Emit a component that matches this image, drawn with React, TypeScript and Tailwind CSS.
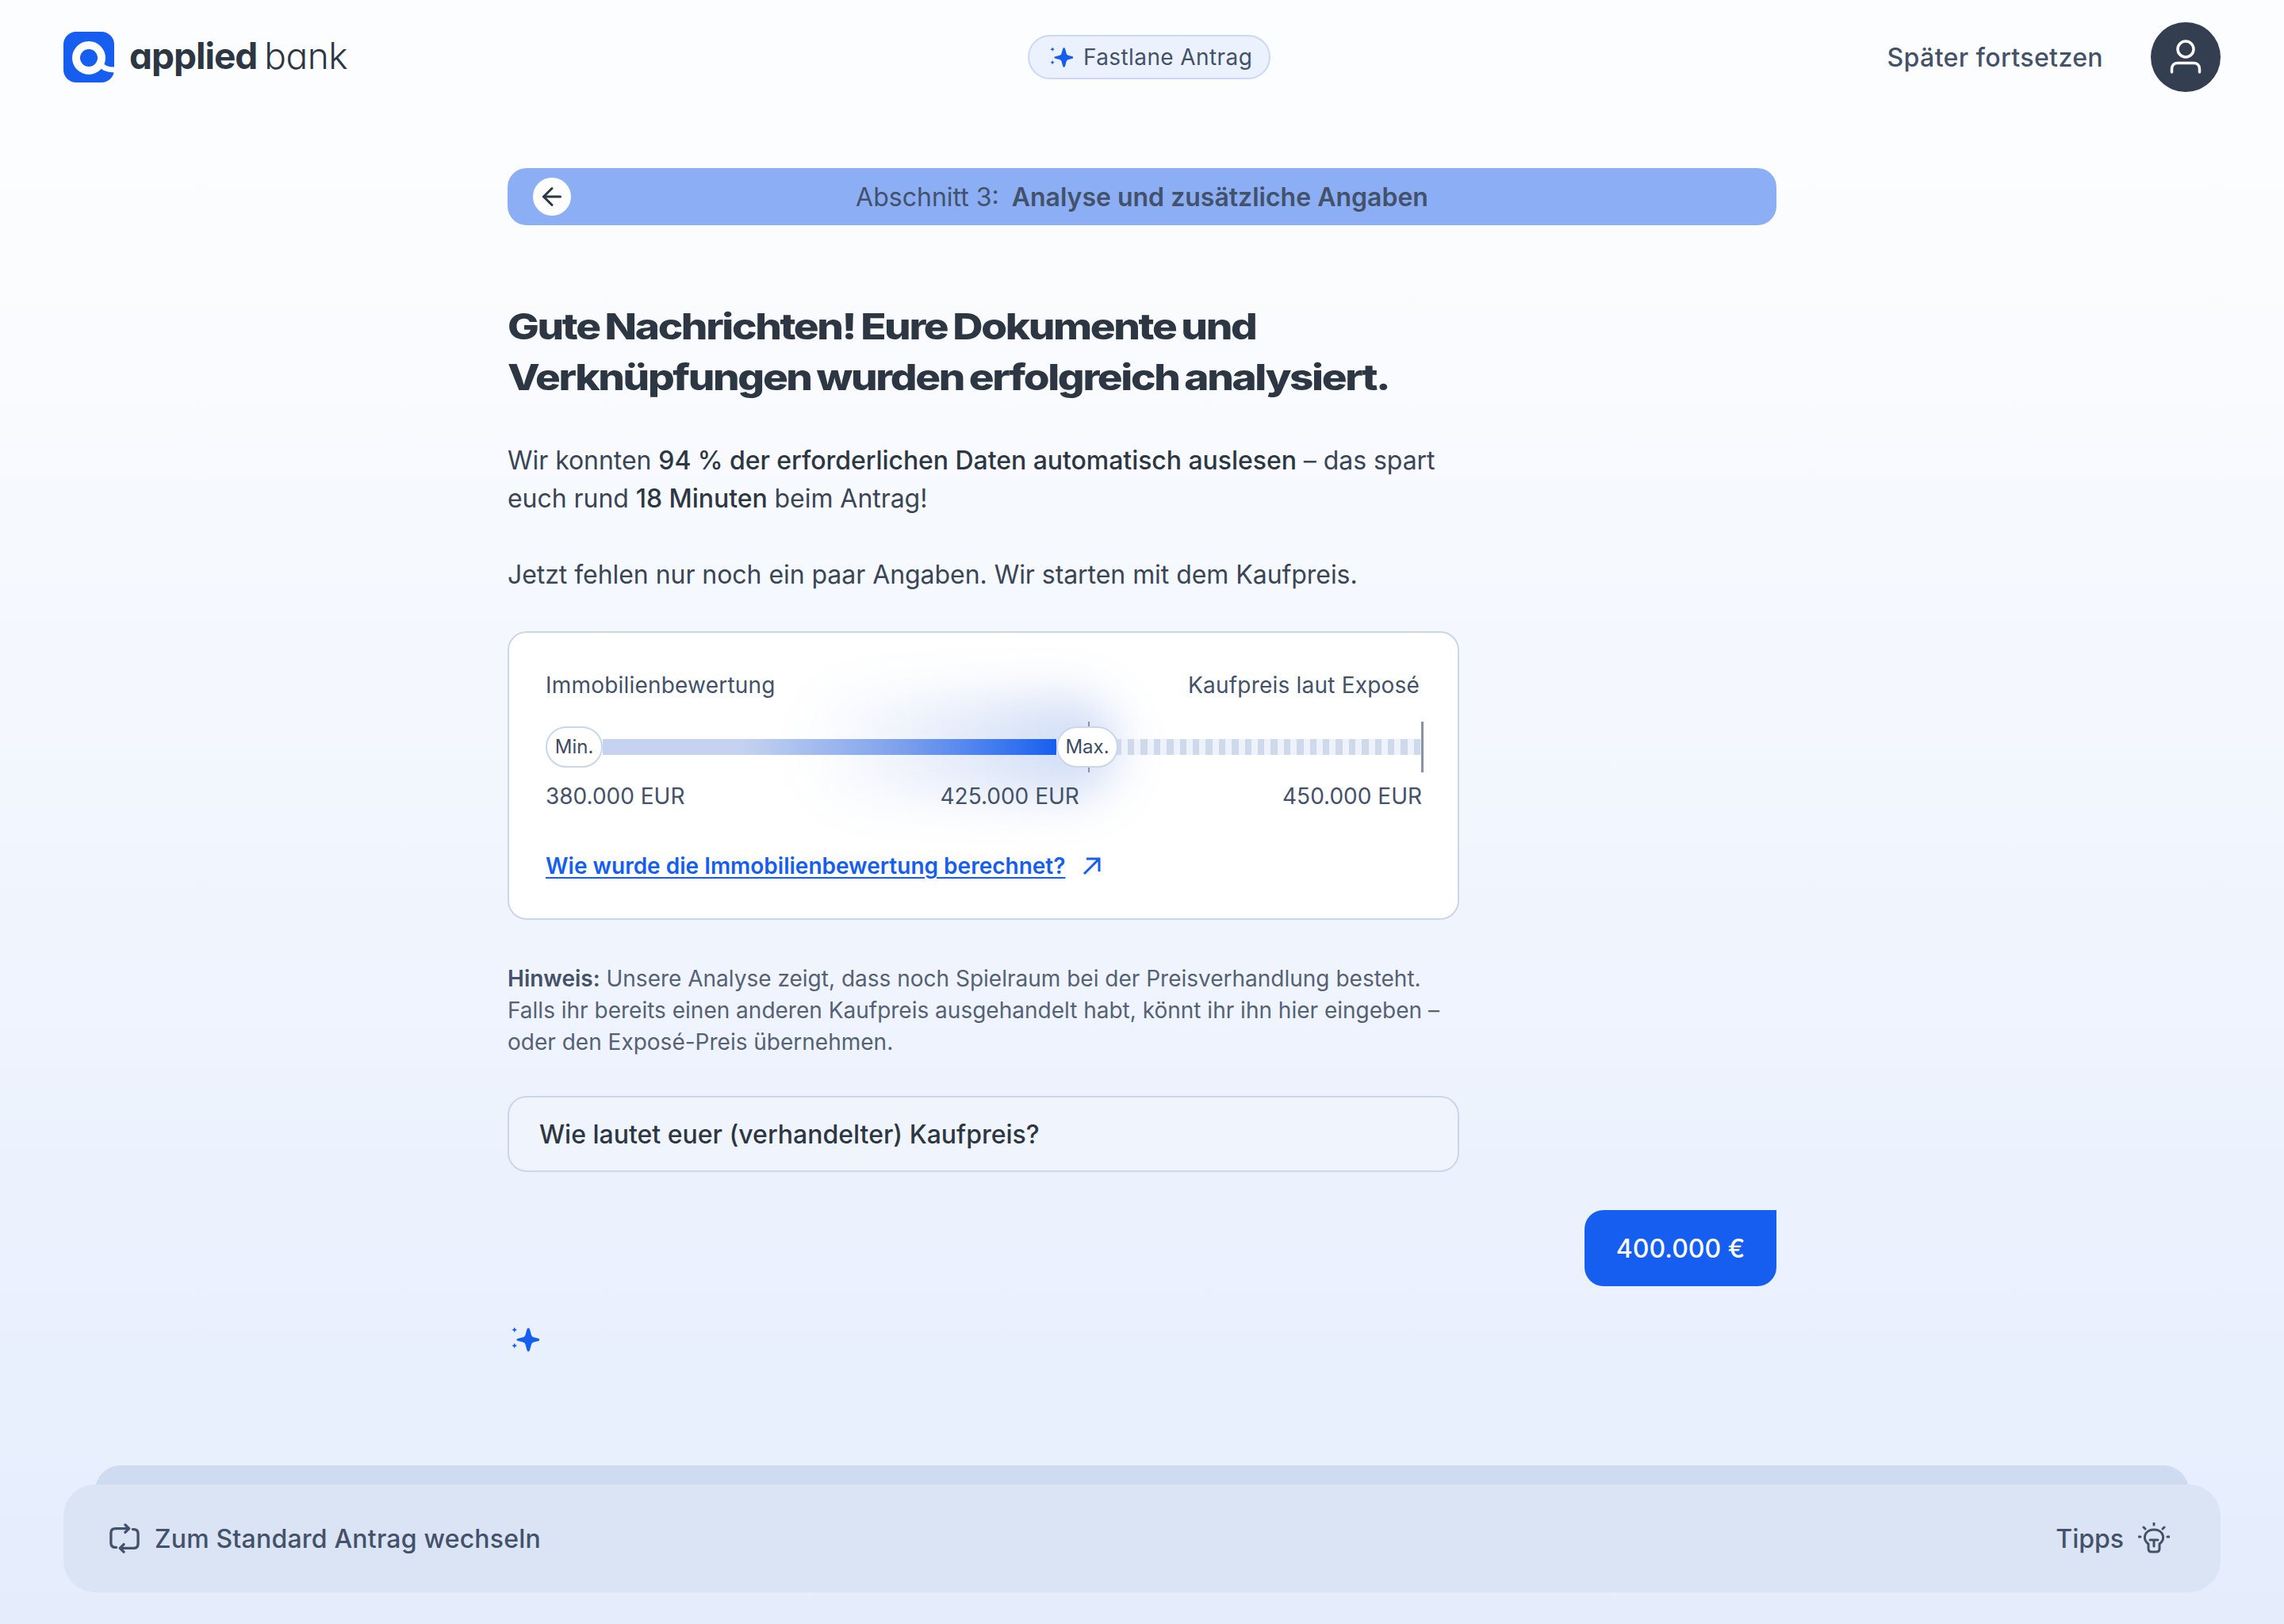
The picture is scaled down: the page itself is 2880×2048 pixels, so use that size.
import { ArrowLeft } from "lucide-react";

const font = "font-['Inter',sans-serif]";

function Sparkle({ className }: { className: string }) {
  return (
    <svg viewBox="0 0 28 28" className={className} fill="#155EEF">
      <path d="M17 2 Q18 2 18.6 4 L20 9.2 Q20.4 11 22 11.4 L27.4 12.8 Q29 13.4 29 14 Q29 14.6 27.4 15.2 L22 16.6 Q20.4 17 20 18.8 L18.6 24 Q18 26 17 26 Q16 26 15.4 24 L14 18.8 Q13.6 17 12 16.6 L6.6 15.2 Q5 14.6 5 14 Q5 13.4 6.6 12.8 L12 11.4 Q13.6 11 14 9.2 L15.4 4 Q16 2 17 2 Z" />
      <path d="M3 1.4 L3.9 3.2 L5.7 4 L3.9 4.8 L3 6.6 L2.1 4.8 L0.3 4 L2.1 3.2 Z" />
      <path d="M3 17.4 L3.9 19.2 L5.7 20 L3.9 20.8 L3 22.6 L2.1 20.8 L0.3 20 L2.1 19.2 Z" />
    </svg>
  );
}

function Logo() {
  return (
    <div className="flex items-center w-[356px]">
      <svg viewBox="0 0 64 64" className="w-16 h-16 shrink-0">
        <rect width="64" height="64" rx="16" fill="#155EEF" />
        <circle cx="32" cy="33" r="16" fill="none" stroke="#fff" strokeWidth="10" />
        <path d="M46 40 C49 45 55 48 64 48" fill="none" stroke="#fff" strokeWidth="7" />
      </svg>
      <span className="ml-[19px] text-[46px] leading-none font-bold tracking-[-1px] text-[#2d3743] [font-feature-settings:'cv11'] mb-1">applied</span>
      <span className="ml-[9px] text-[46px] leading-none font-light tracking-[-0.5px] text-[#2d3743] [font-feature-settings:'cv11'] mb-1">bank</span>
    </div>
  );
}

function Slider() {
  return (
    <div className="relative mt-[26px] h-[64px]">
      {/* glow behind the filled part */}
      <div className="absolute left-[320px] top-[-32px] w-[400px] h-[128px] rounded-full bg-gradient-to-r from-transparent to-[#2f66d6]/25 blur-[30px]" />
      <div className="absolute left-[72px] right-[0px] top-[22px] h-5 flex">
        <div className="w-[572px] bg-gradient-to-r from-[#c5d3f0] from-30% via-[#7ea2ec] via-65% to-[#155eef]" />
        <div className="flex-1 bg-[repeating-linear-gradient(90deg,#eef2fa_0,#eef2fa_8px,#cfd9ec_8px,#cfd9ec_16.4px)]" />
      </div>
      <div className="absolute left-[684px] top-0 w-[2px] h-[64px] bg-[#8a93a3]" />
      <div className="absolute right-[-3px] top-0 w-[3px] h-[64px] bg-[#8a93a3]" />
      <div className="absolute left-0 top-[6px] w-[72px] h-[52px] rounded-[26px] border-2 border-[#cbd6ea] bg-white flex items-center justify-center text-[24px] text-[#3f4b5f]">Min.</div>
      <div className="absolute left-[644px] top-[6px] w-[78px] h-[52px] rounded-[26px] border-2 border-[#cbd6ea] bg-white flex items-center justify-center text-[24px] text-[#3f4b5f]">Max.</div>
    </div>
  );
}

function ValuationCard() {
  return (
    <div className="relative w-[1200px] h-[364px] mt-[47px] rounded-3xl border-2 border-[#cbd6ea] bg-white px-[46px] pt-[46px] overflow-hidden">
      <div className="flex justify-between text-[28px] leading-10 tracking-[0.2px] text-[#44516a] pr-[2px]">
        <span>Immobilienbewertung</span>
        <span>Kaufpreis laut Exposé</span>
      </div>
      <Slider />
      <div className="relative flex mt-[10px] text-[28px] leading-10 text-[#44516a] w-[1105px]">
        <span>380.000 EUR</span>
        <span className="ml-[322px]">425.000 EUR</span>
        <span className="ml-auto">450.000 EUR</span>
      </div>
      <div className="relative flex items-center gap-[22px] mt-[48px]">
        <a className="text-[28px] leading-10 font-semibold text-[#155eef] underline underline-offset-4 decoration-2">
          Wie wurde die Immobilienbewertung berechnet?
        </a>
        <svg viewBox="0 0 24 24" className="w-6 h-6" fill="none" stroke="#155EEF" strokeWidth="3">
          <path d="M2 22 L21 3 M5 3 H21 V19" />
        </svg>
      </div>
    </div>
  );
}

export default function App() {
  return (
    <div className={`${font} relative flex flex-col w-full h-[2048px] overflow-hidden bg-gradient-to-b from-[#fcfdfe] from-10% to-[#e5edfd]`}>
      {/* Header */}
      <header className="flex items-center pl-20 pr-20 pt-7">
        <Logo />
        <div className="ml-[860px] flex items-center gap-[13px] h-14 w-[306px] pl-[26px] rounded-full border-2 border-[#ccd9f2] bg-[#ebf1fd] text-[28px] tracking-[0.4px] text-[#44516a]">
          <Sparkle className="w-[29px] h-[29px]" />
          <span>Fastlane Antrag</span>
        </div>
        <span className="ml-auto pt-[2px] text-[32px] tracking-[0.4px] font-medium text-[#44516a]">Später fortsetzen</span>
        <div className="ml-[60px] flex items-center justify-center w-[88px] h-[88px] rounded-full bg-[#333f50]">
          <svg viewBox="0 0 44 44" className="w-[44px] h-[44px]" fill="none" stroke="#fff" strokeWidth="3.5" strokeLinecap="round">
            <circle cx="22" cy="12" r="10" />
            <path d="M4.5 41 V37 C4.5 32 8 29.5 12 29.5 H32 C36 29.5 39.5 32 39.5 37 V41" />
          </svg>
        </div>
      </header>

      <main className="w-[1600px] mx-auto mt-24">
        {/* Section bar */}
        <div className="relative flex items-center justify-center h-[72px] pt-[2px] rounded-3xl bg-[#8baef5] text-[32px] text-[#44516a]">
          <button className="absolute left-8 top-3 flex items-center justify-center w-12 h-12 rounded-full bg-white">
            <ArrowLeft className="w-9 h-9 text-[#2d3743]" strokeWidth={2} />
          </button>
          <span>Abschnitt 3:</span>
          <span className="ml-[16px] font-semibold">Analyse und zusätzliche Angaben</span>
        </div>

        <h1 className="mt-24 text-[45px] leading-[64px] font-extrabold tracking-[-2px] [word-spacing:-2px] scale-x-[1.178] origin-left whitespace-nowrap text-[#2d3743]">
          Gute Nachrichten! Eure Dokumente und
          <br />
          Verknüpfungen wurden erfolgreich analysiert.
        </h1>

        <p className="mt-[49px] text-[32px] leading-[48px] tracking-[-0.05px] text-[#3a4556]">
          Wir konnten <span className="font-medium text-[#2d3743]">94 % der erforderlichen Daten automatisch auslesen</span> – das spart
          <br />
          euch rund <span className="font-medium text-[#2d3743]">18 Minuten</span> beim Antrag!
        </p>
        <p className="mt-12 text-[32px] leading-[48px] tracking-[-0.05px] text-[#3a4556]">
          Jetzt fehlen nur noch ein paar Angaben. Wir starten mit dem Kaufpreis.
        </p>

        <ValuationCard />

        <p className="mt-[54px] text-[28px] leading-10 text-[#556175]">
          <span className="font-semibold text-[#44516a]">Hinweis:</span> Unsere Analyse zeigt, dass noch Spielraum bei der Preisverhandlung besteht.
          <br />
          Falls ihr bereits einen anderen Kaufpreis ausgehandelt habt, könnt ihr ihn hier eingeben –
          <br />
          oder den Exposé-Preis übernehmen.
        </p>

        <div className="flex items-center mt-12 w-[1200px] h-24 pt-[2px] px-[38px] rounded-3xl border-2 border-[#cbd6ea] bg-[#f0f4fc] text-[32px] font-medium text-[#2d3743]">
          Wie lautet euer (verhandelter) Kaufpreis?
        </div>

        <div className="flex justify-end mt-12">
          <div className="flex items-center justify-center w-[242px] h-24 pt-[2px] rounded-3xl rounded-tr-none bg-[#155eef] text-[32px] font-medium text-white">
            400.000 €
          </div>
        </div>

        <Sparkle className="mt-[50px] ml-[5px] w-[35px] h-[35px]" />
      </main>

      {/* Footer */}
      <footer className="relative mt-auto mb-10 mx-20 h-[136px]">
        <div className="absolute left-10 right-10 -top-6 h-16 rounded-t-[32px] bg-[#cedbf0]" />
        <div className="relative flex items-center justify-between h-full pl-[58px] pr-[64px] rounded-[40px] bg-[#dae4f5] text-[32px] font-medium text-[#44516a]">
          <div className="flex items-center gap-[19px]">
            <svg viewBox="0 0 40 40" className="w-[38px] h-[38px]" fill="none" stroke="currentColor" strokeWidth="3.5" strokeLinecap="round" strokeLinejoin="round">
              <path d="M21 2 L26 7 L21 12" />
              <path d="M25 7 H8 C4 7 2 9 2 13 V26 C2 30 4 32 8 32 H9" />
              <path d="M19 28 L14 33 L19 38" />
              <path d="M15 33 H32 C36 33 38 31 38 27 V14 C38 10 36 8 32 8 H31" />
            </svg>
            <span className="pt-[2px] tracking-[0.2px]">Zum Standard Antrag wechseln</span>
          </div>
          <div className="flex items-center gap-[18px]">
            <span className="pt-[2px]">Tipps</span>
            <svg viewBox="0 0 40 40" className="w-10 h-10" fill="none" stroke="currentColor" strokeWidth="3" strokeLinecap="round" strokeLinejoin="round">
              <path d="M13 27 C9 24 8 20 8.5 17 C9.5 12 14 9 20 9 C26 9 30.5 12 31.5 17 C32 20 31 24 27 27 V33 C27 36 25 37 23 37 H17 C15 37 13 36 13 33 Z" />
              <path d="M15 22 H25 M20 22 V30" />
              <path d="M20 1 V3 M7 6 L9 8 M33 6 L31 8 M1 18 H3 M37 18 H39" />
            </svg>
          </div>
        </div>
      </footer>
    </div>
  );
}
